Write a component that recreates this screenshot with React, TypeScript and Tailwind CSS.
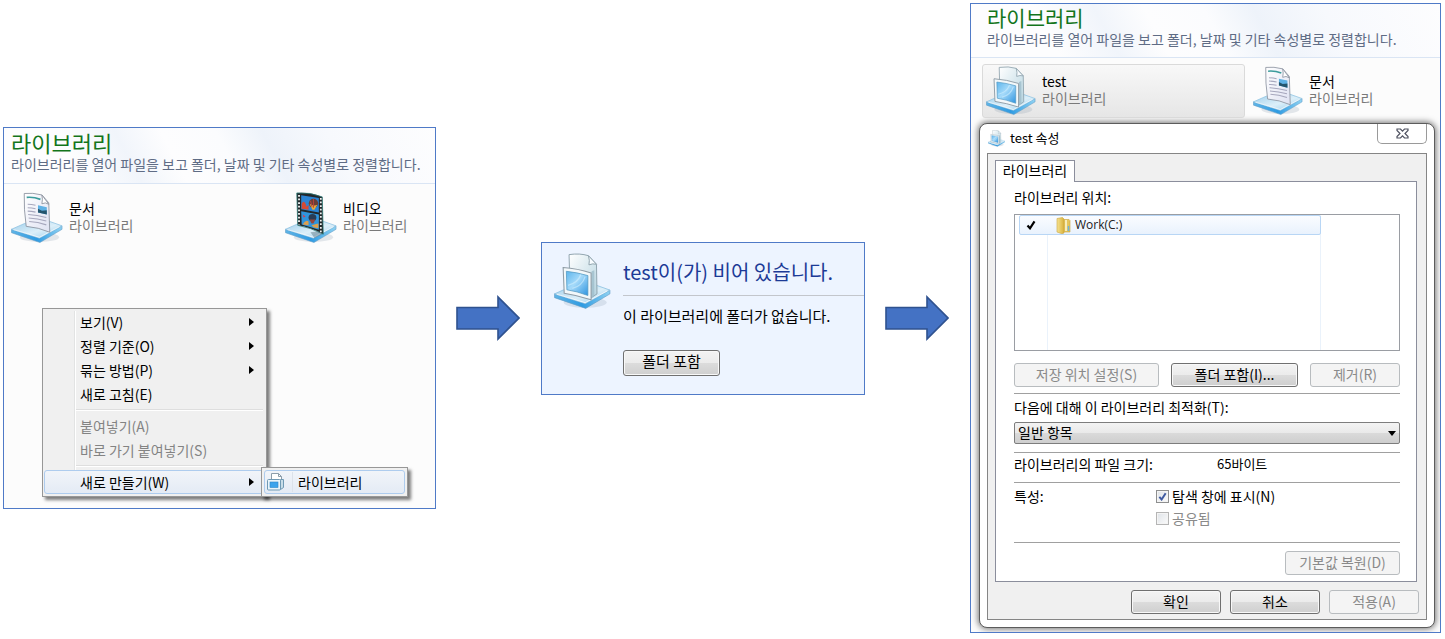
import { useState, type ReactNode } from "react";
import clsx from "clsx";

const Tray = () => (
  <>
    <ellipse cx="29" cy="46" rx="20" ry="5" fill="#7d93a5" opacity=".2" />
    <path d="M.5 38 29 47 52 34.500v3.500L29.500 51.500.5 41.500z" fill="url(#trayEdge)" stroke="#5f9cc6" strokeWidth=".6" />
    <path d="M.5 38 14 32 38 29.500 52 34.500 29 47z" fill="url(#trayTop)" stroke="#8fc3e2" strokeWidth=".8" />
    <path d="M2.500 38.300 29 46.200 49.500 35.300" fill="none" stroke="#fff" strokeWidth=".9" opacity=".8" />
  </>
);

const IconDefs = () => (
  <svg width="0" height="0" className="absolute" aria-hidden="true">
    <defs>
      <linearGradient id="trayTop" x1="0" y1="0" x2="1" y2="1">
        <stop offset="0" stopColor="#9ccdea" />
        <stop offset=".55" stopColor="#dceff9" />
        <stop offset="1" stopColor="#94cbeb" />
      </linearGradient>
      <linearGradient id="trayEdge" x1="0" y1="0" x2="1" y2="0">
        <stop offset="0" stopColor="#5fb4e6" />
        <stop offset=".5" stopColor="#2f9be2" />
        <stop offset="1" stopColor="#8fd2f2" />
      </linearGradient>
      <linearGradient id="paper" x1="0" y1="0" x2="1" y2="1">
        <stop offset="0" stopColor="#ffffff" />
        <stop offset="1" stopColor="#dfe2f2" />
      </linearGradient>
      <linearGradient id="glassPaper" x1="0" y1="0" x2="1" y2="1">
        <stop offset="0" stopColor="#ffffff" />
        <stop offset="1" stopColor="#b4d3df" />
      </linearGradient>
      <linearGradient id="screen" x1="0" y1="0" x2="1" y2="1">
        <stop offset="0" stopColor="#5db5ec" />
        <stop offset=".45" stopColor="#a5dafa" />
        <stop offset="1" stopColor="#2f94df" />
      </linearGradient>
      <linearGradient id="folder" x1="0" y1="0" x2="1" y2="0">
        <stop offset="0" stopColor="#f6e391" />
        <stop offset="1" stopColor="#d9b13a" />
      </linearGradient>
    </defs>
  </svg>
);

const DocumentIcon = ({ className }: { className: string }) => (
  <svg viewBox="0 0 53 53" className={clsx("shrink-0", className)} aria-hidden="true">
    <Tray />
    <path d="M13.500 1.500 Q22 .5 31.500 3 L38.500 11 L39.500 41 Q28 36 15.500 35 Q13 18 13.500 1.500z" fill="url(#paper)" stroke="#8d93a0" strokeWidth=".9" />
    <path d="M31.500 3 Q32.500 7.500 31.500 12 Q35 10 38.500 12.500z" fill="#fff" stroke="#8d93a0" strokeWidth=".9" />
    <path d="M16 5.500 Q23 4.800 30 7.500" fill="none" stroke="#3c9c9c" strokeWidth="1.700" />
    <path d="M17 12.500q4 0 8 1M17 16q4 0 8 1M17 19.500q4 0 8 1M17.500 23q9 .5 18.500 3M18 26.500q9 .5 18 3M18.500 30q9 .5 17.500 3.500" fill="none" stroke="#a6a7bd" strokeWidth="1.100" />
    <path d="M27.500 13.500 36.500 15.500 36.500 23 27.500 20.800z" fill="#5fb1e4" />
    <path d="M27.500 17 31.500 19 36.500 18.500 36.500 23 27.500 20.800z" fill="#24556d" />
  </svg>
);

const VideoIcon = ({ className }: { className: string }) => (
  <svg viewBox="0 0 53 53" className={clsx("shrink-0", className)} aria-hidden="true">
    <Tray />
    <path d="M12 1 Q26 0 38 5 L39 43 Q26 36 13 34z" fill="#23282b" stroke="#2d7b77" strokeWidth=".8" />
    <path d="M16.500 3.200 34.500 6.200 34.500 21 16.500 17.600z" fill="#2b84d4" />
    <path d="M16.500 19.500 34.500 23 34.500 38.500 17 33z" fill="#3095dd" />
    <path d="M17 17v-5q2-4 4 0l1 3 2-2v5z" fill="#d44a35" />
    <ellipse cx="29" cy="11.500" rx="4.800" ry="4.500" fill="#6b3f35" />
    <path d="M25 12q4 3 8 1l-3 5h-2z" fill="#e4a93c" />
    <path d="M29 7v9M26 9l1.500 6" stroke="#ba413d" strokeWidth="1" />
    <ellipse cx="28" cy="26" rx="4" ry="3.600" fill="#283c56" />
    <path d="M25 28h6l-2 4h-2z" fill="#934842" />
    <path d="M18 33q3-5 6-3v4zM27 34l7-2v5l-5-1z" fill="#dca04e" />
    <path d="M18 23l3 2-2 1z" fill="#df3b49" />
    <path d="M14.300 3V33" stroke="#eef3f3" strokeWidth="1.900" strokeDasharray="1.800 1.900" />
    <path d="M36.500 6V41" stroke="#eef3f3" strokeWidth="1.800" strokeDasharray="1.800 1.900" />
    <path d="M26 41l4 6 8-4-3-3z" fill="#49616f" opacity=".4" />
  </svg>
);

const LibraryIcon = ({ className }: { className: string }) => (
  <svg viewBox="0 0 53 53" className={clsx("shrink-0", className)} aria-hidden="true">
    <Tray />
    <path d="M14 1.500 Q24 0 32 2.500 L39.500 10.500 L40 38 L34 42 L15 37z" fill="url(#glassPaper)" stroke="#8fa3ad" strokeWidth=".9" />
    <path d="M32 2.500 Q33.500 7 32.500 11 Q36 9.500 39.500 10.500z" fill="#f8fcff" stroke="#8fa3ad" strokeWidth=".9" />
    <path d="M35 17 37.500 16 37.500 40 34 42z" fill="#9dbdcb" opacity=".8" />
    <path d="M8.500 13.500 Q22 14.500 34.500 18.500 L34.500 43.500 Q22 39.500 9.500 37.500z" fill="#f3f8fa" stroke="#8f9ca6" strokeWidth="1" />
    <path d="M11.500 17 Q21 18 31.500 21 L31.500 39.500 Q21 35.500 12 34.200z" fill="url(#screen)" stroke="#5198c2" strokeWidth=".7" />
    <path d="M13 30Q22 28 25 20M17 33Q26 31 29 22" stroke="#d1effe" strokeWidth="1.200" fill="none" opacity=".6" />
  </svg>
);

const LibrarySmallIcon = () => (
  <svg viewBox="0 0 17 18" className="h-[18px] w-[17px] shrink-0" aria-hidden="true">
    <path d="M4.500.5h7l3 3v10h-10z" fill="#fff" stroke="#8c9eab" />
    <path d="M11.500.5v3h3" fill="none" stroke="#8c9eab" />
    <path d="M13.500 6.500h3v8l-3 2z" fill="#c8dde8" stroke="#6f99b4" />
    <rect x=".5" y="6.500" width="13" height="10.500" rx="1" fill="#e9f4fa" stroke="#6f99b4" />
    <rect x="3" y="9" width="8" height="5.500" fill="#3ba3ec" stroke="#2c86c9" strokeWidth=".6" />
  </svg>
);

const FolderIcon = () => (
  <svg viewBox="0 0 15 17" className="h-[17px] w-[15px] shrink-0" aria-hidden="true">
    <path d="M6 2.500h7l1 1V15H6z" fill="#e5c55c" stroke="#c9a640" strokeWidth=".6" />
    <path d="M9 3h2v11H9z" fill="#f7ecba" />
    <path d="M1 1.500 6.500.5 8 2v14l-2 .8L1 15z" fill="url(#folder)" stroke="#c9a640" strokeWidth=".6" />
    <path d="M12.500 9v5" stroke="#6cb3dd" strokeWidth="1.500" />
  </svg>
);

const CheckIcon = ({ className }: { className?: string }) => (
  <svg viewBox="0 0 10 10" className={className} aria-hidden="true">
    <path d="M1.500 5.500 4 8.300 8.500 1.300" fill="none" stroke="currentColor" strokeWidth="2.200" />
  </svg>
);

const Arrow = () => (
  <svg viewBox="0 0 64 46" className="w-16" aria-hidden="true">
    <path d="M1 12.500H42V2L63 23 42 44V34H1z" fill="#4472c4" stroke="#2f528f" strokeWidth="1.600" />
  </svg>
);

const ExplorerHeader = ({ titleClass, className }: { titleClass: string; className?: string }) => (
  <header
    className={clsx(
      "whitespace-nowrap border-b border-[#dae5f4] bg-[linear-gradient(62deg,#fdfdfe_18%,#f1f5fb_30%,#fdfdfe_40%,#fbfcfe_52%,#eef3fa_62%,#f7f9fd_76%,#fdfdfe)]",
      className,
    )}
  >
    <h1 className={clsx("leading-[26px] text-[#13751b]", titleClass)}>라이브러리</h1>
    <p className="text-sm leading-[18px] text-[#5f6c85]">
      라이브러리를 열어 파일을 보고 폴더, 날짜 및 기타 속성별로 정렬합니다.
    </p>
  </header>
);

const LibraryItem = ({ icon, name, className }: { icon: ReactNode; name: string; className?: string }) => (
  <div className={clsx("flex items-center gap-1.5", className)}>
    {icon}
    <div className="pb-0.5 text-sm leading-[17px]">
      <p className="text-black">{name}</p>
      <p className="text-[#7a7a7a]">라이브러리</p>
    </div>
  </div>
);

const menuGroups = [
  [
    { label: "보기(V)", submenu: true },
    { label: "정렬 기준(O)", submenu: true },
    { label: "묶는 방법(P)", submenu: true },
    { label: "새로 고침(E)" },
  ],
  [
    { label: "붙여넣기(A)", disabled: true },
    { label: "바로 가기 붙여넣기(S)", disabled: true },
  ],
  [{ label: "새로 만들기(W)", submenu: true, active: true }],
] as { label: string; submenu?: boolean; disabled?: boolean; active?: boolean }[][];

const ContextMenu = () => (
  <div className="relative w-[225px] border border-[#979797] bg-[#f0f0f0] p-px pb-0.5 text-sm shadow-[3px_3px_3px_rgba(0,0,0,0.5)]">
    <div className="absolute inset-y-0.5 left-[31px] w-0.5 border-l border-[#e2e3e3] bg-white" />
    {menuGroups.map((group, i) => (
      <div key={i} className="relative">
        {i > 0 && (
          <div className="mr-0.5 ml-8 h-2 pt-[3px]">
            <div className="h-0.5 border-t border-[#dedede] bg-white" />
          </div>
        )}
        {group.map((item) => (
          <button
            key={item.label}
            disabled={item.disabled}
            className={clsx(
              "flex h-6 w-full items-center justify-between rounded-[3px] border pr-2.5 pb-px pl-[35px]",
              item.active ? "border-[#aeccee] bg-[linear-gradient(#f1f4f9,#e4ebf5)]" : "border-transparent",
              item.disabled ? "text-[#838383]" : "text-black",
            )}
          >
            {item.label}
            {item.submenu && (
              <svg viewBox="0 0 5 8" className="h-2 w-[5px]" aria-hidden="true">
                <path d="M0 0 5 4 0 8z" />
              </svg>
            )}
          </button>
        ))}
      </div>
    ))}
    <div className="absolute -bottom-px left-[218px] w-[147px] border border-[#979797] bg-[#f0f0f0] p-0.5 shadow-[3px_3px_3px_rgba(0,0,0,0.5)]">
      <button className="flex h-6 w-full items-center rounded-[3px] border border-[#aeccee] bg-[linear-gradient(#f1f4f9,#e4ebf5)] pb-px pl-0.5 text-black">
        <LibrarySmallIcon />
        <span className="ml-2 border-l border-[#dce2ea] pl-[5px]">라이브러리</span>
      </button>
    </div>
  </div>
);

const LibraryPanel = () => (
  <section className="min-w-0 border border-[#4f7ac7] bg-[#fcfcfc] pb-[11px]">
    <ExplorerHeader titleClass="text-[22px]" className="px-[7px] pt-px pb-2.5" />
    <div className="flex px-[7px] pt-2">
      <LibraryItem icon={<DocumentIcon className="size-[52px]" />} name="문서" className="w-[274px]" />
      <LibraryItem icon={<VideoIcon className="size-[52px]" />} name="비디오" />
    </div>
    <div className="mt-16 ml-[38px]">
      <ContextMenu />
    </div>
  </section>
);

const WinButton = ({
  children,
  disabled,
  size = "h-6 text-sm",
  className,
}: {
  children: ReactNode;
  disabled?: boolean;
  size?: string;
  className?: string;
}) => (
  <button
    disabled={disabled}
    className={clsx(
      "flex items-center justify-center rounded-[3px] border pb-0.5 whitespace-nowrap",
      disabled
        ? "border-[#b8bcbf] bg-[#f4f4f4] text-[#8a8a8a]"
        : "border-[#707070] bg-[linear-gradient(#f3f3f3,#ebebeb_50%,#dcdcdc_50%,#cfcfcf)] text-black shadow-[inset_0_0_0_1px_#f8f8f8]",
      size,
      className,
    )}
  >
    {children}
  </button>
);

const EmptyPanel = () => (
  <section className="flex min-w-0 gap-3 border border-[#4f7ac7] bg-[#edf4ff] pt-2.5 pb-[18px] pl-3">
    <LibraryIcon className="size-[57px]" />
    <div className="min-w-0 flex-1">
      <h2 className="border-b border-[#c3c6cc] pt-1 pb-2 text-xl leading-[30px] whitespace-nowrap text-[#1c3a96]">
        test이(가) 비어 있습니다.
      </h2>
      <p className="mt-2.5 text-[15px] leading-5 whitespace-nowrap text-black">이 라이브러리에 폴더가 없습니다.</p>
      <WinButton size="h-[26px] text-[15px]" className="mt-6 w-[97px]">폴더 포함</WinButton>
    </div>
  </section>
);

const Option = ({ label, defaultChecked = false, disabled }: { label: string; defaultChecked?: boolean; disabled?: boolean }) => {
  const [checked, setChecked] = useState(defaultChecked);

  return (
    <label className={clsx("flex h-5 items-center gap-[3px]", disabled ? "text-[#8a8a8a]" : "text-black")}>
      <span className="relative size-[13px]">
        <input
          type="checkbox"
          checked={checked}
          disabled={disabled}
          onChange={(e) => setChecked(e.target.checked)}
          className="block size-[13px] appearance-none border border-[#8e8f8f] bg-[linear-gradient(135deg,#dfe3e8,#fbfbfb)] shadow-[inset_0_0_0_1px_#f4f4f4] disabled:border-[#b5b5b5]"
        />
        {checked && <CheckIcon className="pointer-events-none absolute inset-0.5 size-[9px] text-[#3f5aa0]" />}
      </span>
      {label}
    </label>
  );
};

const Rule = ({ className }: { className?: string }) => <hr className={clsx("border-[#a0a0a0]", className)} />;

const PropertiesDialog = () => (
  <div
    role="dialog"
    aria-label="test 속성"
    className="mt-[5px] mr-[5px] mb-1 ml-2 rounded-lg border border-[#5c5c5c] bg-white px-[7px] pb-[7px] shadow-[0_0_6px_1px_rgba(0,0,0,0.55)]"
  >
    <div className="flex h-[29px] items-start justify-between pl-px">
      <div className="flex h-7 items-center gap-[5px] text-[13px] text-black">
        <LibraryIcon className="size-[17px]" />
        test 속성
      </div>
      <button aria-label="닫기" className="flex h-5 w-[50px] items-center justify-center rounded-b-[5px] border border-t-0 border-[#9a9a9a]">
        <svg viewBox="0 0 13 11" className="h-[11px] w-[13px]" aria-hidden="true">
          <path d="M1 1H4.500L6.500 3.200 8.500 1H12V2.500L9 5.500 12 8.500V10H8.500L6.500 7.800 4.500 10H1V8.500L4 5.500 1 2.500z" fill="#fff" stroke="#4f5260" strokeWidth="1.200" />
        </svg>
      </button>
    </div>

    <div className="border border-[#858585] bg-[#f0f0f0] pt-1.5 pr-[9px] pb-[5px] pl-[7px] text-sm text-black">
      <div role="tablist" className="flex">
        <button role="tab" aria-selected="true" className="relative z-10 -mb-px h-[22px] w-20 border border-b-0 border-[#8b8e9c] bg-white pb-1 leading-4">
          라이브러리
        </button>
      </div>

      <div role="tabpanel" className="border border-[#8b8e9c] bg-white pt-[5px] pr-4 pb-1.5 pl-[18px] leading-5">
        <p>라이브러리 위치:</p>
        <div role="listbox" aria-label="라이브러리 위치" className="relative mt-[7px] h-[137px] border border-[#9a9da3] pl-1">
          <div className="absolute inset-y-0 left-8 w-[274px] border-x border-[#eaf2fb]" />
          <div role="option" aria-selected="true" className="relative flex h-5 w-[302px] items-center rounded-[2px] border border-[#b8d6f5] bg-[linear-gradient(#fafcff,#e9f2fd)] pl-1.5">
            <CheckIcon className="size-[10px]" />
            <span className="ml-5 flex items-center gap-1 font-['Open_Sans','Noto_Sans_CJK_KR',sans-serif] text-xs text-[#222]">
              <FolderIcon />
              Work(C:)
            </span>
          </div>
        </div>
        <div className="mt-3 flex justify-between">
          <WinButton disabled className="w-[145px]">저장 위치 설정(S)</WinButton>
          <WinButton className="w-[127px]">폴더 포함(I)...</WinButton>
          <WinButton disabled className="w-[90px]">제거(R)</WinButton>
        </div>

        <Rule className="mt-1.5" />
        <label htmlFor="optimize" className="mt-[3px] block">다음에 대해 이 라이브러리 최적화(T):</label>
        <div className="relative mt-[5px]">
          <select
            id="optimize"
            className="block h-[22px] w-full appearance-none rounded-[2px] border border-[#7d7d7d] bg-[linear-gradient(#f3f3f3,#e9e9e9_50%,#dadada_50%,#cecece)] pb-0.5 pl-[3px] text-sm leading-[18px]"
          >
            <option>일반 항목</option>
          </select>
          <svg viewBox="0 0 8 5" className="pointer-events-none absolute top-[9px] right-1 h-[5px] w-2" aria-hidden="true">
            <path d="M0 0H8L4 5z" />
          </svg>
        </div>

        <Rule className="mt-2" />
        <dl className="mt-px grid grid-cols-[203px_1fr]">
          <dt>라이브러리의 파일 크기:</dt>
          <dd className="text-[13px]">65바이트</dd>
        </dl>

        <Rule className="mt-2" />
        <div className="mt-[3px] grid grid-cols-[142px_1fr]">
          <p>특성:</p>
          <div className="space-y-0.5">
            <Option label="탐색 창에 표시(N)" defaultChecked />
            <Option label="공유됨" disabled />
          </div>
        </div>

        <Rule className="mt-3.5" />
        <WinButton disabled className="mt-2 ml-auto w-[115px]">기본값 복원(D)</WinButton>
      </div>

      <div className="-mr-0.5 mt-2 flex justify-end gap-[9px]">
        <WinButton className="w-[90px]">확인</WinButton>
        <WinButton className="w-[90px]">취소</WinButton>
        <WinButton disabled className="w-[90px]">적용(A)</WinButton>
      </div>
    </div>
  </div>
);

const PropertiesPanel = () => (
  <section className="min-w-0 overflow-hidden border border-[#4f7ac7] bg-[#fcfcfc]">
    <ExplorerHeader titleClass="text-[21px]" className="px-4 pb-[9px]" />
    <div className="flex gap-2 pt-1.5 pl-[11px]">
      <LibraryItem
        icon={<LibraryIcon className="size-[50px]" />}
        name="test"
        className="h-[54px] w-[263px] rounded-[3px] border border-[#dadada] bg-[linear-gradient(#f8f8f8,#e6e6e6)] pl-[3px]"
      />
      <LibraryItem icon={<DocumentIcon className="size-[50px]" />} name="문서" />
    </div>
    <PropertiesDialog />
  </section>
);

export default function App() {
  return (
    <div className="min-h-screen bg-white font-['Noto_Sans_CJK_KR',sans-serif]">
      <IconDefs />
      <main className="grid grid-cols-[433fr_65px_324fr_65px_471fr] items-center gap-5 pt-[3px] pr-1 pl-[3px]">
        <LibraryPanel />
        <Arrow />
        <EmptyPanel />
        <Arrow />
        <PropertiesPanel />
      </main>
    </div>
  );
}
